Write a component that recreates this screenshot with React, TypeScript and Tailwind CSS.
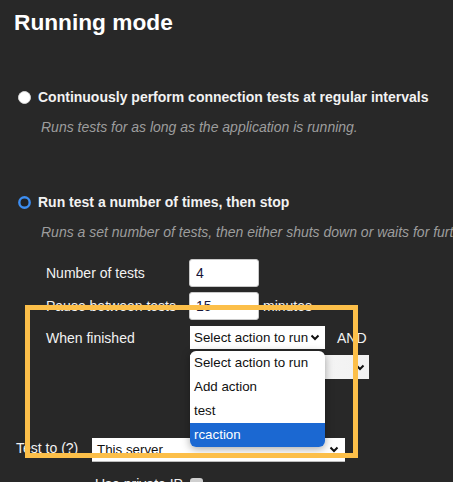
// Running mode settings panel with the "When finished" action list open,
// plus the orange annotation frame drawn over it.

function Chevron() {
  return (
    <svg aria-hidden width="10" height="7" viewBox="0 0 10 7" className="shrink-0">
      <path d="M1.5 1.5 L5 5 L8.5 1.5" fill="none" stroke="#111" strokeWidth="2" />
    </svg>
  );
}

function Radio({ checked }: { checked?: boolean }) {
  return (
    <svg aria-hidden width="13" height="13" viewBox="0 0 13 13" className="shrink-0">
      {checked ? (
        <circle cx="6.5" cy="6.5" r="5.2" fill="#202225" stroke="#3d8ef2" strokeWidth="2.4" />
      ) : (
        <circle cx="6.5" cy="6.5" r="6" fill="#ffffff" stroke="#d8d8d8" strokeWidth="1" />
      )}
    </svg>
  );
}

const options = ["Select action to run", "Add action", "test", "rcaction"];

export default function App() {
  return (
    <div className="relative h-[482px] overflow-hidden bg-[#282828] px-[14px] font-['Liberation_Sans',Arial,sans-serif] text-[14px] leading-[20px] text-[#f2f2f2]">
      <h2 className="pt-[10px] text-[22.7px] font-bold leading-[25px] text-white">
        Running mode
      </h2>

      <div className="mt-[52px] flex items-center gap-[7px] pl-[4px]">
        <Radio />
        <span className="font-bold">Continuously perform connection tests at regular intervals</span>
      </div>
      <p className="mt-[10px] pl-[27px] italic text-[#9d9d9d]">
        Runs tests for as long as the application is running.
      </p>

      <div className="mt-[55px] flex items-center gap-[7px] pl-[4px]">
        <Radio checked />
        <span className="font-bold">Run test a number of times, then stop</span>
      </div>
      <p className="mt-[10px] whitespace-nowrap pl-[27px] italic text-[#9d9d9d]">
        Runs a set number of tests, then either shuts down or waits for further instructions.
      </p>

      <div className="mt-[17px] pl-[32px]">
        <div className="flex h-[28px] items-center">
          <span className="w-[143px]">Number of tests</span>
          <input
            readOnly
            defaultValue="4"
            className="h-[28px] w-[70px] rounded-[3px] border border-[#c9c9c9] bg-white px-[6px] text-[14px] text-[#15153a] outline-none"
          />
        </div>
        <div className="mt-[5px] flex h-[28px] items-center">
          <span className="w-[143px]">Pause between tests</span>
          <input
            readOnly
            defaultValue="15"
            className="h-[28px] w-[70px] rounded-[3px] border border-[#c9c9c9] bg-white px-[6px] text-[14px] text-[#15153a] outline-none"
          />
          <span className="ml-[4px]">minutes</span>
        </div>
        <div className="mt-[6px] flex h-[23px] items-center">
          <span className="w-[144px]">When finished</span>
          <div className="relative z-10 text-[13.333px]">
            <div className="flex h-[23px] w-[135px] items-center justify-between whitespace-nowrap bg-white pl-[4px] pr-[5px] text-[#111]">
              <span>Select action to run</span>
              <Chevron />
            </div>
            <ul className="absolute left-0 top-[25px] w-[135px] overflow-hidden rounded-[6px] bg-white text-[#111] shadow-[0_2px_8px_rgba(0,0,0,0.35)]">
              {options.map((o) => (
                <li
                  key={o}
                  className={`flex h-[24px] items-center whitespace-nowrap pl-[4px] ${
                    o === "rcaction" ? "bg-[#1b68d2] text-white" : ""
                  }`}
                >
                  {o}
                </li>
              ))}
            </ul>
          </div>
          <span className="ml-[12px]">AND</span>
        </div>
        <div className="mt-[6px] flex h-[24px] items-center">
          <span className="w-[144px]" />
          <div className="flex h-[24px] w-[179px] items-center justify-end bg-gradient-to-r from-white to-[#f1f1f1] pr-[4px]">
            <Chevron />
          </div>
        </div>
      </div>

      <div className="mt-[59px] flex items-start pl-[2px]">
        <span className="w-[76px]">Test to (?)</span>
        <div className="flex h-[24px] w-[253px] items-center justify-between border-b border-[#bdbdbd] bg-white pl-[5px] pr-[6px] text-[13.333px] text-[#111]">
          <span>This server</span>
          <Chevron />
        </div>
      </div>

      <div className="mt-[12px] flex h-[20px] items-center pl-[81px]">
        <span className="w-[95px]">Use private IP</span>
        <span className="h-[13px] w-[13px] rounded-[3px] bg-[#cfcfcf]" />
      </div>

      <div className="pointer-events-none absolute left-[25px] top-[305px] z-20 h-[153px] w-[333px] border-[5px] border-[#fcbf49]" />
    </div>
  );
}
